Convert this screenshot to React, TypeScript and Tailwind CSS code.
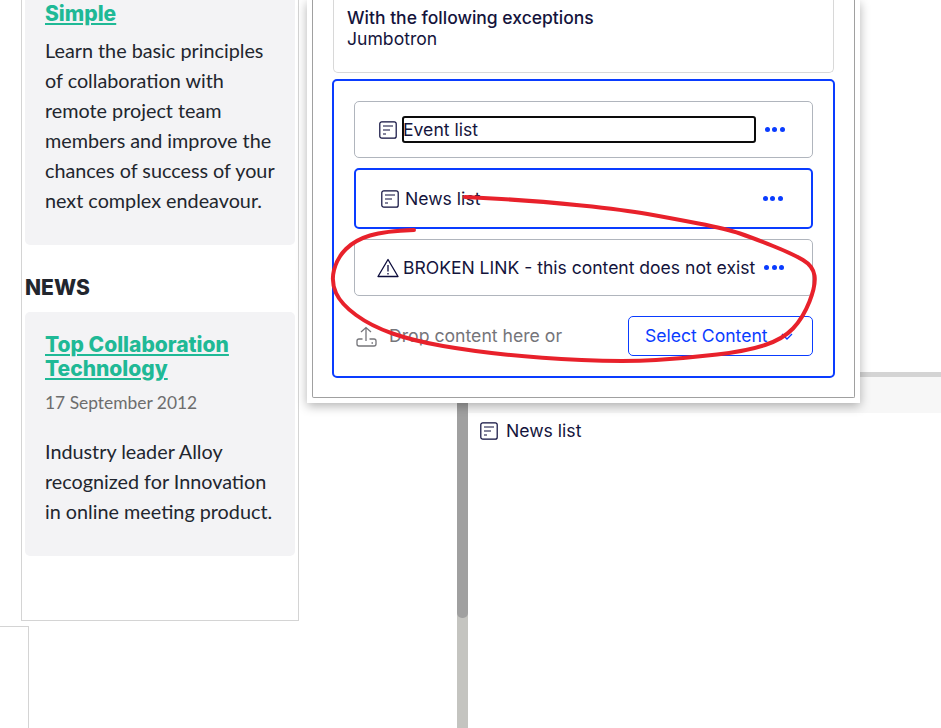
const scribble: [number, number][] = [
  [414, 230], [385, 231], [355, 240], [337, 258], [331, 282], [341, 304], [371, 326], [414, 341], [472, 351],
  [538, 358], [625, 362], [687, 358], [747, 351], [783, 339], [803, 318], [816, 285], [813, 266], [793, 254],
  [753, 238], [727, 229], [670, 218], [625, 210], [538, 201], [465, 197],
];

function smoothPath(pts: [number, number][]) {
  let d = `M${pts[0][0]} ${pts[0][1]}`;
  for (let i = 1; i < pts.length - 1; i++) {
    const mx = (pts[i][0] + pts[i + 1][0]) / 2;
    const my = (pts[i][1] + pts[i + 1][1]) / 2;
    d += ` Q${pts[i][0]} ${pts[i][1]} ${mx} ${my}`;
  }
  const last = pts[pts.length - 1];
  return `${d} L${last[0]} ${last[1]}`;
}

function ListIcon() {
  return (
    <svg width="18" height="18" viewBox="0 0 18 18" fill="none" stroke="#0c0c3c" strokeWidth="1.200" className="shrink-0">
      <rect x="0.800" y="0.800" width="16.400" height="16.400" rx="2" />
      <path d="M4 5h10M4 9h7M4 13h3" />
    </svg>
  );
}

function WarningIcon() {
  return (
    <svg width="22" height="20" viewBox="0 0 22 20" fill="none" stroke="#0c0c3c" strokeWidth="1.300" className="shrink-0">
      <path d="M11 1.500 1 18.500h20L11 1.500Z" strokeLinejoin="round" />
      <path d="M11 7v6.500M11 15v1.600" />
    </svg>
  );
}

function UploadIcon() {
  return (
    <svg width="21" height="21" viewBox="0 0 21 21" fill="none" stroke="#75757a" strokeWidth="1.300" className="shrink-0">
      <path d="M10 15V1.500M5 6l5-4.500L15 6" />
      <path d="M6.500 13H3a2 2 0 0 0-2 2v3a2 2 0 0 0 2 2h15a2 2 0 0 0 2-2v-3a2 2 0 0 0-2-2h-4.500" />
      <path d="M15.500 17h1.500" />
    </svg>
  );
}

function Dots() {
  return (
    <div className="flex gap-[2.500px] shrink-0">
      <span className="w-[5px] h-[5px] rounded-full bg-[#0a3cff]" />
      <span className="w-[5px] h-[5px] rounded-full bg-[#0a3cff]" />
      <span className="w-[5px] h-[5px] rounded-full bg-[#0a3cff]" />
    </div>
  );
}

export default function App() {
  return (
    <div className="relative flex w-[941px] h-[728px] overflow-hidden bg-white font-['Inter',sans-serif] text-[#14143c]">
      {/* Page preview */}
      <div className="w-[457px] shrink-0">
        <div className="ml-[21px] w-[278px] h-[621px] border-x border-b border-[#d4d4d4] px-[3px] font-['Lato',sans-serif] text-[19.800px] leading-[30px] text-[#22262e]">
          <div className="bg-[#f3f3f5] rounded-b-[5px] pl-[20px] pr-[10px] pt-[2px] pb-[30px]">
            <a className="block font-['Inter',sans-serif] font-extrabold text-[21px] leading-[24px] text-[#1fb996] underline">Simple</a>
            <p className="mt-[9px]">
              Learn the basic principles of collaboration with remote project team members and improve the chances of success of your next complex endeavour.
            </p>
          </div>
          <h2 className="font-['Inter',sans-serif] font-extrabold text-[21px] leading-[24px] h-[67px] pt-[31px] text-[#22262e]">NEWS</h2>
          <div className="bg-[#f3f3f5] rounded-[5px] pl-[20px] pr-[10px] pt-[21px] pb-[30px]">
            <a className="block font-['Inter',sans-serif] font-extrabold text-[21px] leading-[24px] text-[#1fb996] underline">
              Top Collaboration Technology
            </a>
            <div className="mt-[7px] text-[17.400px] text-[#6d6d6d]">17 September 2012</div>
            <p className="mt-[18px]">Industry leader Alloy recognized for Innovation in online meeting product.</p>
          </div>
        </div>
        <div className="mt-[5px] w-[29px] h-[110px] border-t border-r border-[#d4d4d4]" />
      </div>

      {/* Scrollbar */}
      <div className="w-[11px] shrink-0 bg-[#c4c4c0]">
        <div className="h-[618px] bg-[#a0a0a0] rounded-b-[5px]" />
      </div>

      {/* Right pane */}
      <div className="flex-1 pt-[372px]">
        <div className="h-[41px] border-t-[5px] border-[#d4d4d4] bg-[#f7f7f7]" />
        <div className="flex items-center gap-[8px] pl-[12px] pt-[9px] text-[17.600px] leading-[18px]">
          <ListIcon />
          <span>News list</span>
        </div>
      </div>

      {/* Dialog */}
      <div className="absolute left-[307px] top-0 w-[553px] h-[403px] bg-white shadow-[0_3px_10px_rgba(0,0,0,0.3)] pl-[5px] pr-[5px] pb-[5px]">
        <div className="h-full border-x border-b border-[#a0a0a0] rounded-b-[2px] px-[19px]">
          <div className="mx-px h-[73px] border-x border-b border-[#d8d8d8] rounded-b-[5px] pl-[13px] pt-[7px] text-[17.600px] leading-[21px]">
            <div className="font-medium text-[17.500px]">With the following exceptions</div>
            <div>Jumbotron</div>
          </div>
          <div className="mt-[6px] h-[299px] border-2 border-[#0a3cff] rounded-[5px] px-[20px] pt-[20px]">
            {/* Content rows */}
            <div className="flex items-center h-[57px] border border-[#b0b5bd] rounded-[5px] pl-[24px]">
              <ListIcon />
              <div className="ml-[5px] w-[354px] h-[27px] flex items-center border-2 border-[#0c0c0c] rounded-[3px] text-[17.600px] leading-[21px]">
                <span className="-ml-px">Event list</span>
              </div>
              <div className="ml-[8.500px]"><Dots /></div>
            </div>
            <div className="mt-[10px] flex items-center h-[61px] border-2 border-[#0a3cff] rounded-[5px] pl-[25px]">
              <ListIcon />
              <span className="ml-[6px] text-[17.600px] leading-[21px] w-[357.500px]">News list</span>
              <Dots />
            </div>
            <div className="mt-[10px] flex items-center h-[57px] border border-[#b0b5bd] rounded-[5px] pl-[22px]">
              <WarningIcon />
              <span className="ml-[4px] w-[361px] text-[17.550px] leading-[21px] whitespace-nowrap">BROKEN LINK - this content does not exist</span>
              <Dots />
            </div>
            {/* Footer */}
            <div className="mt-[20px] flex items-center pl-[2px]">
              <UploadIcon />
              <span className="ml-[12px] text-[17.650px] text-[#75757a] w-[239px]">Drop content here or</span>
              <button className="flex items-center w-[185px] h-[40px] border border-[#0a3cff] rounded-[5px] pl-[16px] text-[17.600px] text-[#0a3cff]">
                Select Content
                <svg width="12" height="7" viewBox="0 0 12 7" fill="none" stroke="#0a3cff" strokeWidth="1.300" className="ml-[13px]">
                  <path d="M1 1l5 5 5-5" />
                </svg>
              </button>
            </div>
          </div>
        </div>
      </div>

      {/* Red annotation */}
      <svg className="absolute left-0 top-0 pointer-events-none" width="941" height="728" fill="none">
        <path d={smoothPath(scribble)} stroke="#e8212b" strokeWidth="4" strokeLinecap="round" strokeLinejoin="round" />
      </svg>
    </div>
  );
}
